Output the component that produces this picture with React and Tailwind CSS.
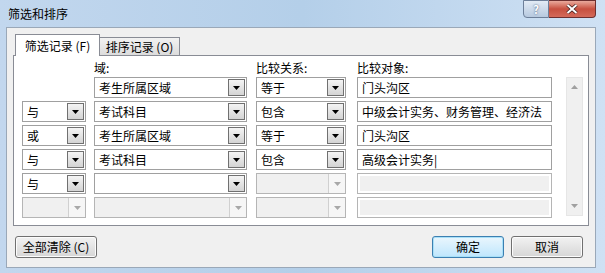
import React from "react";

const font = { fontFamily: '"Noto Sans CJK SC", "Liberation Sans", sans-serif' };

function Arrow({ disabled }) {
    return (
        <svg width="7" height="4" viewBox="0 0 7 4">
            <path d="M0 0 H7 L3.5 4 Z" fill={disabled ? "#a8a8a8" : "#000"} />
        </svg>
    );
}

function Combo({ width, text, disabled }) {
    if (disabled) {
        return (
            <div className={`flex h-[21px] shrink-0 border border-[#b5b5b5] bg-[#f0f0f0] ${width}`}>
                <div className="flex-1" />
                <div className="flex w-[17px] items-center justify-center border-l border-[#d0d0d0] bg-[#f6f6f6]">
                    <Arrow disabled />
                </div>
            </div>
        );
    }
    return (
        <div className={`flex h-[21px] shrink-0 border border-[#a0a0a0] bg-white p-px ${width}`}>
            <div className="flex flex-1 items-center overflow-hidden whitespace-nowrap pl-[3px] text-[12px] leading-none text-black">
                {text}
            </div>
            <div className="flex w-[17px] items-center justify-center border border-[#707070] bg-gradient-to-b from-[#f4f4f4] to-[#d4d4d4]">
                <Arrow />
            </div>
        </div>
    );
}

function Field({ text, disabled }) {
    if (disabled) {
        return (
            <div className="h-[21px] w-[195px] shrink-0 border border-[#b5b5b5] bg-white p-[2px]">
                <div className="h-full w-full bg-[#f0f0f0]" />
            </div>
        );
    }
    return (
        <div className="flex h-[21px] w-[195px] shrink-0 items-center overflow-hidden whitespace-nowrap border border-[#a0a0a0] bg-white pl-[4px] text-[12px] leading-none text-black">
            {text}
        </div>
    );
}

const rows = [
    { op: null, field: "考生所属区域", rel: "等于", val: "门头沟区" },
    { op: "与", field: "考试科目", rel: "包含", val: "中级会计实务、财务管理、经济法" },
    { op: "或", field: "考生所属区域", rel: "等于", val: "门头沟区" },
    { op: "与", field: "考试科目", rel: "包含", val: "高级会计实务|" },
    { op: "与", field: "", rel: null, val: null },
    { op: undefined, field: null, rel: null, val: null },
];

function Row({ r }) {
    return (
        <div className="flex h-[21px] items-center">
            {r.op === null ? (
                <div className="h-[21px] w-[64px] shrink-0" />
            ) : r.op === undefined ? (
                <Combo width="w-[64px]" disabled />
            ) : (
                <Combo width="w-[64px]" text={r.op} />
            )}
            <div className="ml-[8px]">
                {r.field === null ? (
                    <Combo width="w-[153px]" disabled />
                ) : (
                    <Combo width="w-[153px]" text={r.field} />
                )}
            </div>
            <div className="ml-[9px]">
                {r.rel === null ? (
                    <Combo width="w-[90px]" disabled />
                ) : (
                    <Combo width="w-[90px]" text={r.rel} />
                )}
            </div>
            <div className="ml-[11px]">
                {r.val === null ? <Field disabled /> : <Field text={r.val} />}
            </div>
        </div>
    );
}

function Button({ children, focus, className }) {
    return (
        <div
            className={`flex h-[22px] items-center justify-center rounded-[3px] border text-[12px] leading-none text-black ${
                focus
                    ? "border-[#3c7fb1] bg-gradient-to-b from-[#eaf6fd] to-[#bee6fd] shadow-[inset_0_0_0_1px_#a8e0f8]"
                    : "border-[#707070] bg-gradient-to-b from-[#f2f2f2] to-[#d6d6d6] shadow-[inset_0_0_0_1px_#fcfcfc]"
            } ${className}`}
        >
            {children}
        </div>
    );
}

export default function App() {
    return (
        <div
            className="flex h-[273px] w-[605px] flex-col overflow-hidden bg-gradient-to-r from-[#c2d7ee] via-[#b4cfe9] to-[#cfe1f4]"
            style={font}
        >
            {/* title bar */}
            <div className="relative flex h-[27px] shrink-0 items-center pl-[8px]">
                <span className="text-[12px] leading-none text-black">筛选和排序</span>
                <div className="absolute right-[9px] top-0 flex">
                    <div className="flex h-[18px] w-[26px] items-center justify-center rounded-bl-[4px] border border-[#6d7f99] bg-gradient-to-b from-[#e2ebf5] to-[#b7c9df] text-[11px] font-bold leading-none text-white [text-shadow:0_0_2px_#34496a]">
                        ?
                    </div>
                    <div className="flex h-[18px] w-[47px] items-center justify-center rounded-br-[4px] border border-l-0 border-[#6d2f2f] bg-gradient-to-b from-[#e9a99c] via-[#c74f3f] to-[#d46a5a]">
                        <svg width="12" height="10" viewBox="0 0 12 10">
                            <path d="M1.5 1 L10.5 9 M10.5 1 L1.5 9" stroke="#3a1a1a" strokeWidth="3.4" />
                            <path d="M1.5 1 L10.5 9 M10.5 1 L1.5 9" stroke="#fff" strokeWidth="2" />
                        </svg>
                    </div>
                </div>
            </div>

            {/* body */}
            <div className="mb-[5px] ml-[6px] mr-[9px] flex flex-1 flex-col border border-[#9aa8b8] bg-[#f0f0f0] px-[6px] pt-[6px]">
                {/* tabs */}
                <div className="flex items-end pl-[2px]">
                    <div className="relative z-10 -mb-px flex h-[22px] w-[85px] items-center justify-center border border-b-0 border-[#898c95] bg-white text-[12px] leading-none text-black">
                        筛选记录 (F)
                    </div>
                    <div className="flex h-[18px] w-[80px] items-center justify-center border border-b-0 border-l-0 border-[#898c95] bg-gradient-to-b from-[#f2f2f2] to-[#dcdcdc] text-[12px] leading-none text-black">
                        排序记录 (O)
                    </div>
                </div>

                {/* panel */}
                <div className="flex h-[171px] border border-[#898c95] bg-white pl-[8px] pt-[6px]">
                    <div className="flex flex-col">
                        <div className="flex h-[15px] text-[12px] leading-none text-black">
                            <div className="w-[72px]" />
                            <div className="w-[162px]">域:</div>
                            <div className="w-[101px]">比较关系:</div>
                            <div>比较对象:</div>
                        </div>
                        <div className="flex flex-col gap-[3px]">
                            {rows.map((r, i) => (
                                <Row key={i} r={r} />
                            ))}
                        </div>
                    </div>
                    <div className="ml-[14px] mt-[15px] flex h-[139px] w-[17px] flex-col items-center justify-between border border-[#e6e6e6] bg-[#f0f0f0] py-[7px]">
                        <svg width="7" height="4" viewBox="0 0 7 4">
                            <path d="M0 4 H7 L3.5 0 Z" fill="#a0a0a0" />
                        </svg>
                        <svg width="7" height="4" viewBox="0 0 7 4">
                            <path d="M0 0 H7 L3.5 4 Z" fill="#a0a0a0" />
                        </svg>
                    </div>
                </div>

                {/* buttons */}
                <div className="mt-[10px] flex items-center pl-[2px] pr-[6px]">
                    <Button className="w-[82px]">全部清除 (C)</Button>
                    <div className="flex-1" />
                    <Button focus className="w-[72px]">确定</Button>
                    <Button className="ml-[7px] w-[72px]">取消</Button>
                </div>
            </div>
        </div>
    );
}
